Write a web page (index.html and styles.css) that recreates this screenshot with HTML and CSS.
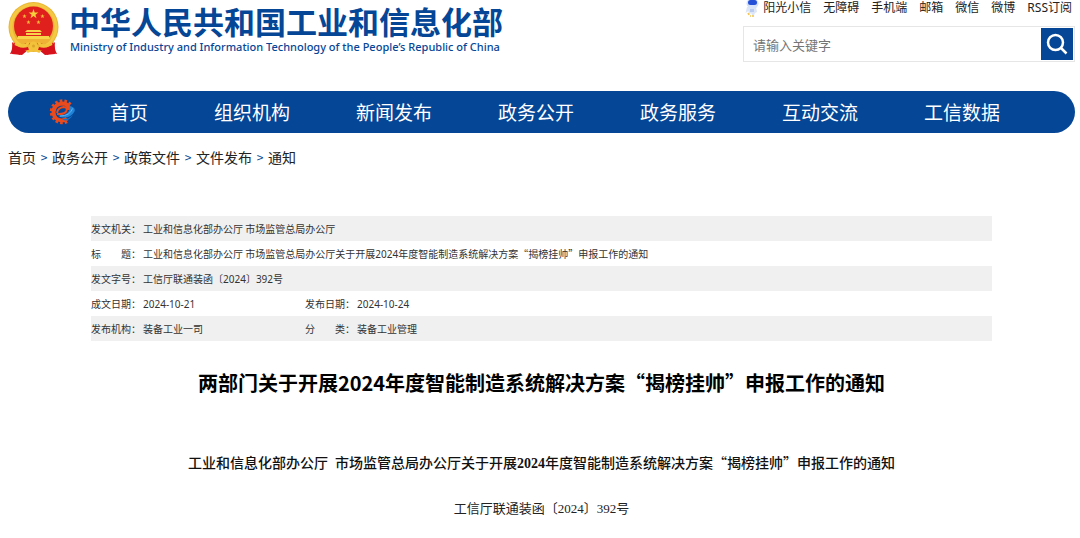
FILE: index.html
```html
<!DOCTYPE html>
<html lang="zh-CN">
<head>
<meta charset="utf-8">
<meta name="viewport" content="width=device-width, initial-scale=1">
<title>两部门关于开展2024年度智能制造系统解决方案“揭榜挂帅”申报工作的通知</title>
<link rel="stylesheet" href="styles.css">
</head>
<body>
<div class="page">
  <header class="header">
    <a class="brand" href="#">
      <svg class="emblem" viewBox="0 0 51 54" aria-hidden="true">
        <path d="M6 38 L4 52 L14 53 L20 48 L31 48 L37 53 L47 52 L45 38Z" fill="#d8121c"/>
        <circle cx="25.500" cy="25" r="25" fill="#e9b534"/>
        <circle cx="25.500" cy="25" r="22.500" fill="none" stroke="#f4c843" stroke-width="3"/>
        <circle cx="25.500" cy="24" r="19.500" fill="#e0201c"/>
        <path d="M25.500 7l1.200 3.500h3.700l-3 2.200 1.100 3.500-3-2.100-3 2.100 1.100-3.500-3-2.200h3.700z" fill="#f8cf3c"/>
        <g fill="#f5b93a">
          <path id="s" d="M16.500 12l.6 1.400 1.500.1-1.200 1 .4 1.500-1.300-.8-1.300.8.4-1.500-1.200-1 1.500-.1z"/>
          <use href="#s" x="18"/><use href="#s" x="4" y="6"/><use href="#s" x="14" y="6"/>
        </g>
        <path d="M19 28h13l2 2H17zM18 31h15v2H18zM10 34h31l1 3H9z" fill="#f8d44b"/>
        <path d="M8 37h35l-4 4H12z" fill="#efb235"/>
        <path d="M4 40q7 8 16 5l1 3q-7 0-9 5l-4-2-6 1q3-5 2-12zM47 40q-7 8-16 5l-1 3q7 0 9 5l4-2 6 1q-3-5-2-12z" fill="#d8121c"/>
        <path d="M7 42q8 4 14-1M44 42q-8 4-14-1M19 50q6-4 13 0" fill="none" stroke="#f3c33a" stroke-width="2.500"/>
        <circle cx="25.500" cy="44" r="4.500" fill="#f2c23b"/>
        <circle cx="25.500" cy="44" r="1.500" fill="#dca42a"/>
      </svg>
      <span class="brand-text">
        <span class="brand-cn">中华人民共和国工业和信息化部</span>
        <span class="brand-en" lang="en">Ministry of Industry and Information Technology of the People’s Republic of China</span>
      </span>
    </a>
    <div class="tools">
      <nav class="quick" aria-label="快捷链接">
        <a class="quick-link quick-mascot" href="#">
          <svg class="mascot" viewBox="0 0 14 18" aria-hidden="true">
            <path d="M2 7l-1.500 6 3-2 .5 4 2-2 2 4 2-4 2-1-1-5z" fill="#dce6f7"/>
            <ellipse cx="7.500" cy="3.500" rx="6" ry="5.200" fill="#d5e2f8"/>
            <rect x="3" y="0" width="9" height="5" rx="2.500" fill="#2450d8"/>
            <path d="M5 9h4v3H5z" fill="#b9ccef"/>
            <path d="M3 13l1 2M8 15v2M5 16h1" stroke="#f5c451" stroke-width="1.500"/>
          </svg>阳光小信</a>
        <a class="quick-link" href="#">无障碍</a>
        <a class="quick-link" href="#">手机端</a>
        <a class="quick-link" href="#">邮箱</a>
        <a class="quick-link" href="#">微信</a>
        <a class="quick-link" href="#">微博</a>
        <a class="quick-link" href="#">RSS订阅</a>
      </nav>
      <form class="search" role="search">
        <input class="search-input" type="text" placeholder="请输入关键字" aria-label="请输入关键字">
        <button class="search-button" type="button" aria-label="搜索">
          <svg class="search-icon" viewBox="0 0 22 22" aria-hidden="true">
            <circle cx="9.500" cy="9.500" r="7.500" fill="none" stroke="#fff" stroke-width="2.500"/>
            <path d="M14.500 14.500l6 6" stroke="#fff" stroke-width="2.500"/>
          </svg>
        </button>
      </form>
    </div>
  </header>

  <nav class="main-nav" aria-label="主导航">
    <svg class="nav-logo" viewBox="0 0 26 26" aria-hidden="true">
      <path d="M21.500 5.500A11 11 0 1 0 18.500 22.500" fill="none" stroke="#ea4a1c" stroke-width="3" stroke-dasharray="2.600 2"/>
      <path d="M20 11Q20 4.500 13.500 4.500Q5 5 4.500 13Q5 21 12.500 21.500Q16 21.500 18 19.500" fill="none" stroke="#ea4a1c" stroke-width="4"/>
      <path d="M8 15Q16 15.500 17.500 12Q18.500 8 14.500 8Q9 8.500 8 14" fill="none" stroke="#ea4a1c" stroke-width="2"/>
      <path d="M9 16.500Q18 17 20.500 11Q21 9 20 7Q27 8 25.500 12.500Q22 19 14 18.500Q10.500 18.500 9 16.500Z" fill="#1f83d8"/>
      <path d="M11 17Q21 17 23.500 9.500" fill="none" stroke="#63b2ee" stroke-width="1"/>
      <path d="M13 20Q20 20.500 24 15.500Q21 21.500 16 21.500Z" fill="#1673c8"/>
    </svg>
    <a class="nav-link" href="#">首页</a>
    <a class="nav-link" href="#">组织机构</a>
    <a class="nav-link" href="#">新闻发布</a>
    <a class="nav-link" href="#">政务公开</a>
    <a class="nav-link" href="#">政务服务</a>
    <a class="nav-link" href="#">互动交流</a>
    <a class="nav-link" href="#">工信数据</a>
  </nav>

  <nav class="crumbs" aria-label="当前位置">
    <a class="crumb" href="#">首页</a><span class="sep">&gt;</span>
    <a class="crumb" href="#">政务公开</a><span class="sep">&gt;</span>
    <a class="crumb" href="#">政策文件</a><span class="sep">&gt;</span>
    <a class="crumb" href="#">文件发布</a><span class="sep">&gt;</span>
    <a class="crumb" href="#">通知</a>
  </nav>

  <main class="article">
    <table class="meta">
      <colgroup><col class="col-label"><col class="col-value"><col class="col-label"><col></colgroup>
      <tbody>
        <tr><th scope="row">发文机关：</th><td colspan="3">工业和信息化部办公厅 市场监管总局办公厅</td></tr>
        <tr><th scope="row">标　　题：</th><td colspan="3">工业和信息化部办公厅 市场监管总局办公厅关于开展<span class="digits">2024</span>年度智能制造系统解决方案“揭榜挂帅”申报工作的通知</td></tr>
        <tr><th scope="row">发文字号：</th><td colspan="3">工信厅联通装函〔<span class="digits">2024</span>〕<span class="digits">392</span>号</td></tr>
        <tr><th scope="row">成文日期：</th><td><span class="digits">2024-10-21</span></td><th scope="row">发布日期：</th><td><span class="digits">2024-10-24</span></td></tr>
        <tr><th scope="row">发布机构：</th><td>装备工业一司</td><th scope="row">分　　类：</th><td>装备工业管理</td></tr>
      </tbody>
    </table>
    <h1 class="title">两部门关于开展2024年度智能制造系统解决方案“揭榜挂帅”申报工作的通知</h1>
    <h2 class="subtitle">工业和信息化部办公厅&ensp;市场监管总局办公厅关于开展<span class="num">2024</span>年度智能制造系统解决方案“揭榜挂帅”申报工作的通知</h2>
    <p class="doc-no">工信厅联通装函〔<span class="num">2024</span>〕<span class="num">392</span>号</p>
  </main>
</div>
</body>
</html>
```
FILE: styles.css
```css
* {
  box-sizing: border-box;
}

body {
  margin: 0;
  background: #fff;
  color: #222;
  font-family: "Noto Sans CJK SC", "Noto Sans", sans-serif;
}

a {
  color: inherit;
  text-decoration: none;
}

.page {
  padding: 0 5px 0 8px;
}

.header {
  display: flex;
  justify-content: space-between;
  align-items: flex-start;
}

.brand {
  display: flex;
  gap: 10px;
  padding-top: 2px;
  color: #054696;
}

.emblem {
  width: 51px;
  height: 54px;
}

.brand-text {
  display: flex;
  flex-direction: column;
}

.brand-cn {
  font-size: 31px;
  line-height: 38px;
  font-weight: 700;
}

.brand-en {
  padding-left: 1px;
  font-family: "Noto Sans", sans-serif;
  font-size: 11px;
  line-height: 14px;
  font-weight: 500;
}

.tools {
  width: 332px;
}

.quick {
  display: flex;
  justify-content: flex-end;
  gap: 12px;
  padding-right: 3px;
  font-family: "Noto Sans", "Noto Sans CJK SC", sans-serif;
  font-size: 12px;
  line-height: 16px;
  white-space: nowrap;
}

.quick-mascot {
  display: flex;
  gap: 4px;
}

.mascot {
  width: 14px;
  height: 18px;
}

.search {
  display: flex;
  margin-top: 8px;
  padding: 1px;
  border: 1px solid #e6e6e6;
}

.search-input {
  flex: 1;
  min-width: 0;
  padding: 0 8px;
  border: 0;
  background: transparent;
  font: inherit;
  font-size: 13px;
}

.search-input::placeholder {
  color: #757575;
}

.search-button {
  display: flex;
  justify-content: center;
  align-items: center;
  width: 32px;
  height: 32px;
  padding: 0;
  border: 0;
  background: #054696;
}

.search-icon {
  width: 22px;
  height: 22px;
}

.main-nav {
  display: flex;
  align-items: center;
  gap: 66px;
  margin-top: 29px;
  padding-left: 41px;
  border-radius: 21px;
  background: #054696;
  color: #fff;
  font-size: 19px;
  line-height: 42px;
  white-space: nowrap;
}

.nav-logo {
  width: 26px;
  height: 26px;
  margin-right: -31px;
}

.crumbs {
  display: flex;
  align-items: center;
  margin-top: 14px;
  font-size: 14px;
  line-height: 20px;
}

.sep {
  width: 16px;
  color: #054696;
  font-size: 12px;
  text-align: center;
}

.article {
  padding: 0 83px;
  margin-top: 49px;
}

.meta {
  width: 100%;
  table-layout: fixed;
  border-collapse: collapse;
  color: #333;
  font-size: 10px;
  line-height: 25px;
}

.meta tr:nth-child(odd) {
  background: #f0f0f0;
}

.meta th,
.meta td {
  padding: 0;
  font-weight: 400;
  text-align: left;
  white-space: nowrap;
}

.digits {
  font-family: "Noto Sans", sans-serif;
  line-height: 1;
}

.col-label {
  width: 52px;
}

.col-value {
  width: 162px;
}

.title {
  margin: 27px 0 0;
  color: #000;
  font-size: 20px;
  line-height: 30px;
  font-weight: 700;
  text-align: center;
  white-space: nowrap;
}

.subtitle {
  margin: 54px 0 0;
  color: #111;
  font-size: 14px;
  line-height: 20px;
  font-weight: 500;
  text-align: center;
  white-space: nowrap;
}

.doc-no {
  margin: 26px 0 0;
  font-size: 13px;
  line-height: 20px;
  font-weight: 400;
  text-align: center;
}

.num {
  font-family: "Liberation Serif", serif;
  line-height: 1;
}

.subtitle .num {
  font-weight: 700;
}
```
